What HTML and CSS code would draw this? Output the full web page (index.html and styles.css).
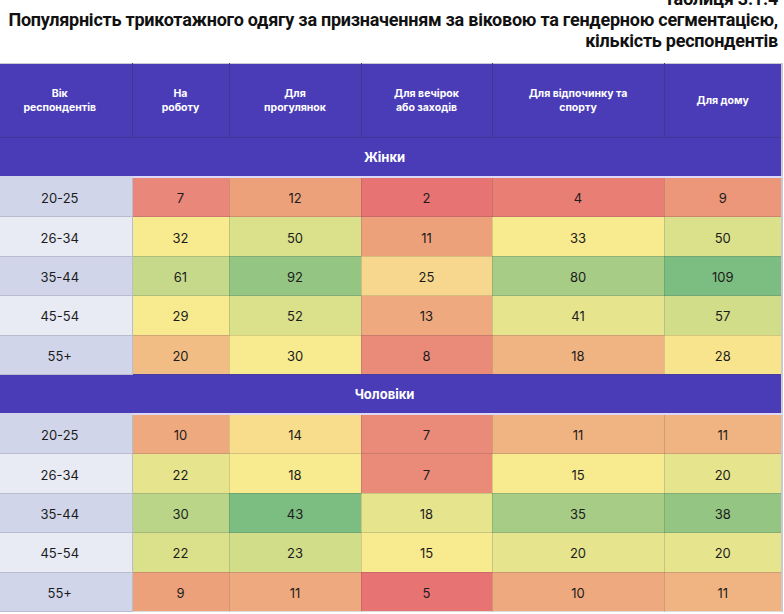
FILE: index.html
```html
<!DOCTYPE html>
<html lang="uk">
<head>
<meta charset="utf-8">
<link rel="stylesheet" href="styles.css">
</head>
<body>
<div class="title">
  <div>Таблиця 3.1.4</div>
  <div>Популярність трикотажного одягу за призначенням за віковою та гендерною сегментацією,</div>
  <div>кількість респондентів</div>
</div>
<table class="heat">
  <colgroup>
    <col class="c-age"><col class="c1"><col class="c2"><col class="c3"><col class="c4"><col class="c5">
  </colgroup>
  <thead>
    <tr class="head">
      <th>Вік<br>респондентів</th>
      <th>На<br>роботу</th>
      <th>Для<br>прогулянок</th>
      <th>Для вечірок<br>або заходів</th>
      <th>Для відпочинку та<br>спорту</th>
      <th>Для дому</th>
    </tr>
  </thead>
  <tbody>
    <tr class="section"><td colspan="6">Жінки</td></tr>
    <tr class="row first odd"><td class="age">20-25</td><td class="h-r2">7</td><td class="h-o1">12</td><td class="h-r1">2</td><td class="h-r3">4</td><td class="h-o2">9</td></tr>
    <tr class="row even"><td class="age">26-34</td><td class="h-y1">32</td><td class="h-yg1">50</td><td class="h-o1">11</td><td class="h-y1">33</td><td class="h-yg1">50</td></tr>
    <tr class="row odd"><td class="age">35-44</td><td class="h-g1">61</td><td class="h-g3">92</td><td class="h-yo">25</td><td class="h-g2">80</td><td class="h-g4">109</td></tr>
    <tr class="row even"><td class="age">45-54</td><td class="h-y1">29</td><td class="h-yg1">52</td><td class="h-o3">13</td><td class="h-yg0">41</td><td class="h-yg2">57</td></tr>
    <tr class="row odd"><td class="age">55+</td><td class="h-o4">20</td><td class="h-y1">30</td><td class="h-r2b">8</td><td class="h-o5">18</td><td class="h-y2">28</td></tr>
    <tr class="section"><td colspan="6">Чоловіки</td></tr>
    <tr class="row first odd"><td class="age">20-25</td><td class="h-o3">10</td><td class="h-y3">14</td><td class="h-r2b">7</td><td class="h-o5">11</td><td class="h-o5">11</td></tr>
    <tr class="row even"><td class="age">26-34</td><td class="h-yg0">22</td><td class="h-y1">18</td><td class="h-r2b">7</td><td class="h-y1">15</td><td class="h-yg0">20</td></tr>
    <tr class="row odd"><td class="age">35-44</td><td class="h-g1b">30</td><td class="h-g4">43</td><td class="h-yg0">18</td><td class="h-g2">35</td><td class="h-g3">38</td></tr>
    <tr class="row even"><td class="age">45-54</td><td class="h-yg1">22</td><td class="h-yg2">23</td><td class="h-y1">15</td><td class="h-yg0">20</td><td class="h-yg0">20</td></tr>
    <tr class="row odd"><td class="age">55+</td><td class="h-o1">9</td><td class="h-o3">11</td><td class="h-r1">5</td><td class="h-o3">10</td><td class="h-o5">11</td></tr>
  </tbody>
</table>
</body>
</html>
```
FILE: styles.css
```css
html, body {
  margin: 0;
  padding: 0;
  background: #ffffff;
  overflow: hidden;
}

.title {
  margin-top: -12px;
  padding-right: 6px;
  text-align: right;
  font-family: "Roboto", "Liberation Sans", sans-serif;
  font-weight: 700;
  font-size: 18px;
  line-height: 21px;
  letter-spacing: -0.25px;
  color: #111111;
}

.heat {
  margin-top: 12px;
  margin-left: -12px;
  width: 794px;
  table-layout: fixed;
  border-collapse: collapse;
  font-family: "Inter", "Roboto", sans-serif;
  border-top: 1px solid #c9c9cf;
  border-right: 2px solid #c9c9cf;
}

.c-age { width: 144px; }
.c1 { width: 97px; }
.c2 { width: 132px; }
.c3 { width: 131px; }
.c4 { width: 172px; }
.c5 { width: 118px; }

.head th {
  height: 73px;
  padding: 0 4px;
  background: #4a3cb7;
  color: #ffffff;
  font-size: 10.5px;
  font-weight: 700;
  line-height: 14px;
  text-align: center;
  vertical-align: middle;
  border-left: 1px solid #3f3795;
  border-bottom: 1px solid #3f3795;
}

.head th:first-child { border-left: none; }

.section td {
  height: 38px;
  padding: 0;
  background: #4a3cb7;
  color: #ffffff;
  font-size: 13px;
  font-weight: 700;
  text-align: center;
  vertical-align: middle;
}

.row td {
  height: 36.4px;
  padding: 2px 0 0;
  font-size: 13px;
  color: #1c1c1c;
  text-align: center;
  vertical-align: middle;
  border: 1px solid rgba(60, 60, 60, 0.18);
}

.row.first td {
  border-top: 2px solid #ddd8f6;
}

.row.odd .age { background: #d1d5e9; }
.row.even .age { background: #e8eaf4; }

.row .age {
  border-left: none;
  border-color: #b9bccc;
}

.row.first .age { border-top-color: #d1d5e9; }

/* heat colours */
.h-r1 { background: #e87373; }
.h-r2 { background: #e8877a; }
.h-r2b { background: #e98b78; }
.h-r3 { background: #e87e74; }
.h-o1 { background: #eda17b; }
.h-o2 { background: #ec967a; }
.h-o3 { background: #eeaa7e; }
.h-o4 { background: #f1bd84; }
.h-o5 { background: #f0b482; }
.h-yo { background: #f7d78e; }
.h-y1 { background: #f8ea8e; }
.h-y2 { background: #f8e48d; }
.h-y3 { background: #f8de8c; }
.h-yg0 { background: #e6e48d; }
.h-yg1 { background: #dbe08a; }
.h-yg2 { background: #d2dd8a; }
.h-g1 { background: #c6d98a; }
.h-g1b { background: #bad587; }
.h-g2 { background: #a6cc85; }
.h-g3 { background: #94c582; }
.h-g4 { background: #7cbd81; }
```
